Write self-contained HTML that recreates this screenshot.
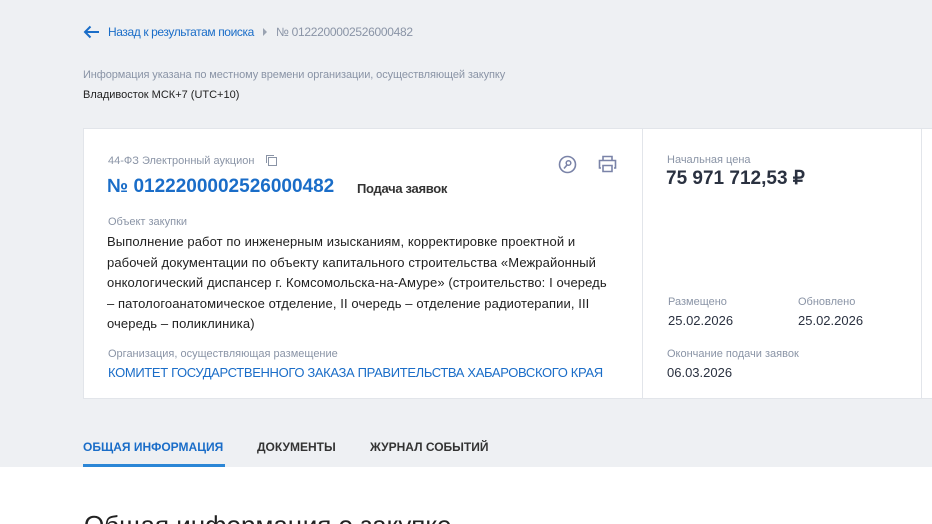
<!DOCTYPE html>
<html><head><meta charset="utf-8"><style>
*{margin:0;padding:0;box-sizing:border-box}
html,body{width:932px;height:524px;overflow:hidden}
body{background:#eef0f3;font-family:"Liberation Sans","Noto Sans CJK SC",sans-serif;position:relative;color:#334059}
.a{position:absolute;white-space:nowrap}
.g{color:#8a94a6}
.card{position:absolute;left:83px;top:128px;width:860px;height:271px;background:#fff;border:1px solid #e2e5ea}
</style></head><body>
<svg class="a" style="left:83px;top:25px" width="18" height="14" viewBox="0 0 18 14"><path d="M16 7H2M7.5 1.5L2 7l5.5 5.5" stroke="#1a6dc8" stroke-width="2" fill="none"/></svg>
<div class="a" style="left:108px;top:25px;font-size:12px;color:#1a6dc8;letter-spacing:-0.4px">Назад к результатам поиска</div>
<svg class="a" style="left:262px;top:28px" width="6" height="8"><path d="M1 0l4 4-4 4z" fill="#9aa3b2"/></svg>
<div class="a g" style="left:276px;top:25px;font-size:12px;letter-spacing:-0.3px">№ 0122200002526000482</div>
<div class="a g" style="left:83px;top:69px;font-size:11px;letter-spacing:-0.1px">Информация указана по местному времени организации, осуществляющей закупку</div>
<div class="a" style="left:83px;top:89px;font-size:11px;color:#222">Владивосток МСК+7 (UTC+10)</div>
<div class="card"></div>
<div class="a" style="left:642px;top:129px;width:1px;height:269px;background:#e2e5ea"></div>
<div class="a" style="left:921px;top:129px;width:1px;height:269px;background:#e2e5ea"></div>
<div class="a g" style="left:108px;top:155px;font-size:11px">44-ФЗ Электронный аукцион</div>
<svg class="a" style="left:265px;top:154px" width="13" height="13" viewBox="0 0 13 13"><rect x="3.5" y="3.5" width="8" height="8" fill="none" stroke="#8a94a6"/><path d="M1.5 9V1.5H9" fill="none" stroke="#8a94a6"/></svg>
<svg class="a" style="left:558px;top:155px" width="19" height="19" viewBox="0 0 19 19"><circle cx="9.5" cy="9.5" r="8" fill="none" stroke="#7a83a8" stroke-width="1.6"/><circle cx="10.5" cy="8" r="2.3" fill="none" stroke="#7a83a8" stroke-width="1.5"/><path d="M9 10l-3 3.5" stroke="#7a83a8" stroke-width="1.6"/></svg>
<svg class="a" style="left:598px;top:155px" width="19" height="18" viewBox="0 0 19 18"><path d="M5 5V1.5h9V5M3 13H1.5V5.5h16V13H16M5 10.5h9V16.5H5z" fill="none" stroke="#7a83a8" stroke-width="1.6"/></svg>
<div class="a" style="left:107px;top:176px;font-size:19px;font-weight:bold;color:#1a6dc8">№ 0122200002526000482</div>
<div class="a" style="left:357px;top:181px;font-size:13px;font-weight:bold;color:#333;letter-spacing:-0.3px">Подача заявок</div>
<div class="a g" style="left:108px;top:216px;font-size:11px">Объект закупки</div>
<div class="a" style="left:107px;top:232px;font-size:13px;line-height:20.5px;color:#222;letter-spacing:0.1px">Выполнение работ по инженерным изысканиям, корректировке проектной и<br>рабочей документации по объекту капитального строительства «Межрайонный<br>онкологический диспансер г. Комсомольска-на-Амуре» (строительство: I очередь<br>– патологоанатомическое отделение, II очередь – отделение радиотерапии, III<br>очередь – поликлиника)</div>
<div class="a g" style="left:108px;top:348px;font-size:11px">Организация, осуществляющая размещение</div>
<div class="a" style="left:108px;top:365px;font-size:13px;color:#1a6dc8;letter-spacing:-0.35px">КОМИТЕТ ГОСУДАРСТВЕННОГО ЗАКАЗА ПРАВИТЕЛЬСТВА ХАБАРОВСКОГО КРАЯ</div>
<div class="a g" style="left:667px;top:154px;font-size:11px">Начальная цена</div>
<div class="a" style="left:666px;top:167px;font-size:19px;font-weight:bold;color:#2a3140">75 971 712,53 ₽</div>
<div class="a g" style="left:668px;top:296px;font-size:11px">Размещено</div>
<div class="a" style="left:668px;top:313px;font-size:13px;color:#2a3140">25.02.2026</div>
<div class="a g" style="left:798px;top:296px;font-size:11px">Обновлено</div>
<div class="a" style="left:798px;top:313px;font-size:13px;color:#2a3140">25.02.2026</div>
<div class="a g" style="left:667px;top:348px;font-size:11px">Окончание подачи заявок</div>
<div class="a" style="left:667px;top:365px;font-size:13px;color:#2a3140">06.03.2026</div>
<div class="a" style="left:0;top:467px;width:932px;height:57px;background:#fff"></div>
<div class="a" style="left:83px;top:440px;font-size:12px;font-weight:bold;color:#1a6dc8">ОБЩАЯ ИНФОРМАЦИЯ</div>
<div class="a" style="left:83px;top:464px;width:142px;height:3px;background:#2b86d6"></div>
<div class="a" style="left:257px;top:440px;font-size:12px;font-weight:bold;color:#333">ДОКУМЕНТЫ</div>
<div class="a" style="left:370px;top:440px;font-size:12px;font-weight:bold;color:#333">ЖУРНАЛ СОБЫТИЙ</div>
<div class="a" style="left:84px;top:510px;font-size:26px;color:#222">Общая информация о закупке</div>
</body></html>
